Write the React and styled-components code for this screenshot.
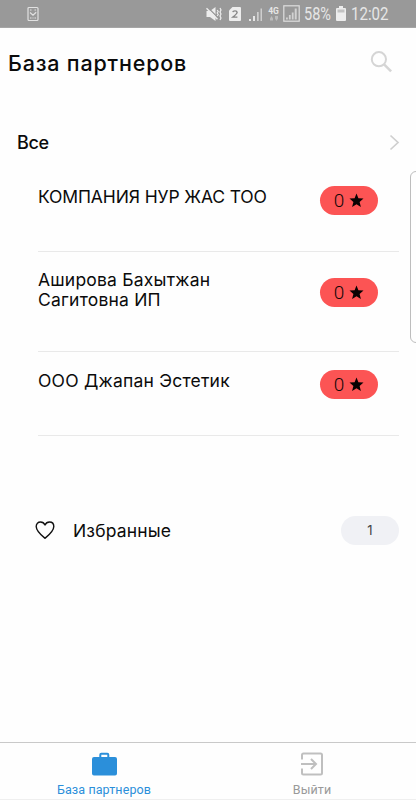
import React from "react";
import styled, { createGlobalStyle } from "styled-components";

const GlobalStyle = createGlobalStyle`
  * { box-sizing: border-box; }
  body { margin: 0; background: #fefefe; }
`;

const Screen = styled.div`
  position: relative;
  display: flex;
  flex-direction: column;
  width: 416px;
  height: 800px;
  overflow: hidden;
  background: #fefefe;
  color: #0b0b0b;
  font-family: Inter, "Open Sans", sans-serif;
`;

const StatusBar = styled.div`
  display: flex;
  align-items: center;
  height: 28px;
  flex: none;
  padding: 0 27px 0 27px;
  background: #999;
  border-bottom: 1px solid #a6a6a6;
  color: #e6e6e6;
  font-family: Roboto, sans-serif;
  svg { display: block; flex: none; }
`;

const StatusIcons = styled.div`
  display: flex;
  align-items: center;
  margin-left: auto;
`;

const StatusText = styled.span`
  width: ${(p) => p.$width}px;
  margin-left: ${(p) => p.$gap}px;
  font-size: 17.5px;
  line-height: 26px;
  white-space: nowrap;
  span {
    display: inline-block;
    transform: scaleX(${(p) => p.$squeeze});
    transform-origin: left;
  }
`;

const Header = styled.header`
  display: flex;
  align-items: center;
  justify-content: space-between;
  height: 68px;
  flex: none;
  padding: 0 23px 0 8px;
`;

const Title = styled.h1`
  margin: 0;
  padding-top: 2px;
  font-size: 21.5px;
  font-weight: 500;
  line-height: 28px;
  letter-spacing: 0.8px;
  white-space: nowrap;
`;

const SectionHeader = styled.div`
  display: flex;
  align-items: center;
  justify-content: space-between;
  height: 32px;
  flex: none;
  margin-top: 30px;
  padding: 0 16px 0 17px;
`;

const SectionTitle = styled.h2`
  margin: 0;
  padding-top: 2px;
  font-size: 18px;
  font-weight: 500;
  line-height: 24px;
  letter-spacing: -0.3px;
`;

const PartnerList = styled.div`
  display: flex;
  flex-direction: column;
  margin: 10px 17px 0 38px;
`;

const PartnerRow = styled.div`
  display: flex;
  align-items: flex-start;
  height: ${(p) => (p.$tall ? 100 : 84)}px;
  padding: 18px 21px 0 0;
  border-bottom: 1px solid #e9e9e9;
`;

const RowContent = styled.div`
  display: flex;
  flex: 1;
  align-items: center;
  justify-content: space-between;
`;

const PartnerName = styled.div`
  padding-bottom: ${(p) => (p.$tall ? 5 : 8)}px;
  font-size: 17.5px;
  line-height: 20px;
  letter-spacing: ${(p) => p.$tracking}px;
  white-space: pre;
`;

const Rating = styled.div`
  display: flex;
  align-items: center;
  justify-content: center;
  gap: 5px;
  width: 58px;
  height: 29px;
  flex: none;
  border-radius: 15px;
  background: #fc5454;
  color: #160808;
  font-family: Roboto, sans-serif;
  font-size: 19px;
  font-weight: 300;
  line-height: 30px;
`;

const Favorites = styled.div`
  display: flex;
  align-items: center;
  height: 30px;
  flex: none;
  margin-top: 79px;
  padding: 0 17px 0 35px;
`;

const FavoritesLabel = styled.span`
  padding-top: 1px;
  margin-left: 18px;
  font-size: 17.5px;
  line-height: 24px;
  letter-spacing: 0.15px;
`;

const Count = styled.span`
  width: 58px;
  height: 29px;
  margin-left: auto;
  border-radius: 15px;
  background: #f0f1f5;
  color: #444;
  font-size: 13px;
  line-height: 29px;
  text-align: center;
`;

const TabBar = styled.nav`
  display: grid;
  grid-template-columns: 1fr 1fr;
  height: 58px;
  flex: none;
  margin-top: auto;
  border-top: 1px solid #c9c9c9;
  border-bottom: 1px solid #efefef;
`;

const Tab = styled.div`
  display: flex;
  flex-direction: column;
  align-items: center;
  padding-top: 9px;
  color: ${(p) => (p.$active ? "#2b8fda" : "#999")};
  font-family: Roboto, sans-serif;
  font-size: 12.5px;
  line-height: 16px;
  letter-spacing: 0.1px;
  svg { display: block; margin-bottom: 6px; }
`;

const EdgePanel = styled.div`
  position: absolute;
  top: 171px;
  right: -6px;
  width: 12px;
  height: 172px;
  border: 1px solid #bdbdbd;
  border-radius: 7px;
  background: #fefefe;
`;

const TaskIcon = () => (
  <svg width="12" height="16" viewBox="0 0 12 16" fill="none" stroke="#e2e2e2" strokeWidth="1.2">
    <rect x="1" y="1.5" width="10" height="13" rx="1" />
    <path d="M3 4h1.5M7.5 4H9M3 6.5l3 2.7 3.2-3M3 12h1.5M5.5 12h1M7.5 12H9" />
  </svg>
);

const MuteIcon = () => (
  <svg width="16" height="16" viewBox="0 0 16 16">
    <path d="M0.500 5h3.500l5.500-4v14L4 11H.5z" fill="#ededed" />
    <path d="M1.800 1.500l10 10" stroke="#999" strokeWidth="1.200" />
    <path d="M0.500 2.200l11 11" stroke="#ededed" strokeWidth="1.500" />
    <path d="M11.200 4l1 1.5-1 1.5 1 1.5-1 1.5M14 2l1 2-1 2 1 2-1 2 1 2-1 2" fill="none" stroke="#ededed" strokeWidth="1.2" />
  </svg>
);

const SimIcon = () => (
  <svg width="12" height="14" viewBox="0 0 12 14">
    <path d="M3.5 0H11a1 1 0 0 1 1 1v12a1 1 0 0 1-1 1H1a1 1 0 0 1-1-1V3.5z" fill="#ededed" />
    <path d="M3.8 5.2Q4 3.9 6 3.9t2.1 1.5Q8.200 6.600 3.900 10.100H8.400" fill="none" stroke="#858585" strokeWidth="1.4" />
  </svg>
);

const SignalIcon = () => (
  <svg width="14" height="14" viewBox="0 0 14 14" fill="#e6e6e6">
    <path d="M0 12h2v2H0zM4 9h2v5H4z" />
    <path d="M8 5h1.700v9H8zM11.500 1.500h1.500V14h-1.500z" fill="#cecece" />
  </svg>
);

const NetworkLabel = styled.div`
  display: flex;
  flex-direction: column;
  align-items: center;
  width: 13px;
  margin: 0 3px 0 4px;
  font-size: 8.5px;
  font-weight: 700;
  line-height: 8px;
  svg { margin-top: 1px; }
`;

const BoxSignalIcon = () => (
  <svg width="17" height="17" viewBox="0 0 17 17">
    <rect x="0.800" y="0.800" width="15.400" height="15.400" fill="none" stroke="#dedede" strokeWidth="1.200" />
    <path d="M3 12.500h1.800v2H3zM5.900 10h1.800v4.500H5.900zM8.800 7.500h1.800v7H8.800zM11.700 3.500h2v11h-2z" fill="#d2d2d2" />
  </svg>
);

const BatteryIcon = () => (
  <svg width="10" height="15" viewBox="0 0 10 15">
    <path d="M3 0h4v2h2a1 1 0 0 1 1 1v11a1 1 0 0 1-1 1H1a1 1 0 0 1-1-1V3a1 1 0 0 1 1-1h2z" fill="#ededed" />
    <path d="M1.500 3.500h7v3h-7z" fill="#c2c2c2" />
  </svg>
);

const SearchIcon = () => (
  <svg width="23" height="23" viewBox="0 0 23 23" fill="none" stroke="#d5d5d5">
    <circle cx="8.900" cy="8.200" r="7.100" strokeWidth="2" />
    <path d="M13.800 13.100l7.300 7.200" strokeWidth="2.500" />
  </svg>
);

const ChevronIcon = () => (
  <svg width="11" height="17" viewBox="0 0 11 17" fill="none" stroke="#cfcfcf" strokeWidth="1.700">
    <path d="M1.500 1.500l7.500 7-7.500 7" />
  </svg>
);

const StarIcon = () => (
  <svg width="15" height="15" viewBox="0 0 15 15" fill="#090303">
    <path d="M7.500 0.500l1.900 4.700 5.100.4-3.900 3.300 1.300 5.200-4.400-2.800-4.400 2.800 1.300-5.200L.5 5.600l5.100-.4z" />
  </svg>
);

const HeartIcon = () => (
  <svg width="20" height="20" viewBox="0 0 20 20" fill="none" stroke="#111" strokeWidth="1.400" strokeLinejoin="round">
    <path d="M10 18.300C6.200 15.200 1.200 11.200 1.200 6.500 1.200 3.700 3 2 5.500 2 7.500 2 9.200 3.200 10 5c.8-1.800 2.500-3 4.500-3 2.500 0 4.300 1.700 4.300 4.500 0 4.700-5 8.700-8.800 11.800z" />
  </svg>
);

const BriefcaseIcon = () => (
  <svg width="25" height="24" viewBox="0 0 25 24" fill="#2b8fda">
    <path fillRule="evenodd" d="M7.300 5V2.800Q7.300.8 9.300.8h6q2 0 2 2V5H23q2 0 2 2v14.500q0 2-2 2H2q-2 0-2-2V7q0-2 2-2zM9.300 5h6V2.800h-6z" />
  </svg>
);

const ExitIcon = () => (
  <svg width="24" height="24" viewBox="0 0 24 24" fill="none" stroke="#bfbfbf" strokeWidth="2">
    <path d="M2 7.500V3q0-1.500 1.500-1.500h17Q22 1.500 22 3v18q0 1.500-1.500 1.500h-17Q2 22.500 2 21v-4.500M1 12h14.500M11 7l5 5-5 5" />
  </svg>
);

const partners = [
  { name: "КОМПАНИЯ НУР ЖАС ТОО", tracking: -0.13 },
  { name: "Аширова Бахытжан\nСагитовна ИП", tracking: 0.2, tall: true },
  { name: "ООО Джапан Эстетик", tracking: 0.22 },
];

export default function App() {
  return (
    <Screen>
      <GlobalStyle />
      <StatusBar>
        <TaskIcon />
        <StatusIcons>
          <MuteIcon />
          <svg width="7" height="1" />
          <SimIcon />
          <svg width="8" height="1" />
          <SignalIcon />
          <NetworkLabel>
            4G
            <svg width="8" height="5" viewBox="0 0 8 5" fill="#bcbcbc">
              <path d="M0 2.500L1.500 0 3 2.500v2H0zM5 0h3v2.500L6.500 5 5 2.500z" />
            </svg>
          </NetworkLabel>
          <BoxSignalIcon />
          <StatusText $width={27} $gap={4} $squeeze={0.83}><span>58%</span></StatusText>
          <svg width="5" height="1" />
          <BatteryIcon />
          <StatusText $width={38} $gap={5} $squeeze={0.86}><span>12:02</span></StatusText>
        </StatusIcons>
      </StatusBar>
      <Header>
        <Title>База партнеров</Title>
        <SearchIcon />
      </Header>
      <SectionHeader>
        <SectionTitle>Все</SectionTitle>
        <ChevronIcon />
      </SectionHeader>
      <PartnerList>
        {partners.map((p) => (
          <PartnerRow key={p.name} $tall={p.tall}>
            <RowContent>
              <PartnerName $tracking={p.tracking} $tall={p.tall}>{p.name}</PartnerName>
              <Rating>0<StarIcon /></Rating>
            </RowContent>
          </PartnerRow>
        ))}
      </PartnerList>
      <Favorites>
        <HeartIcon />
        <FavoritesLabel>Избранные</FavoritesLabel>
        <Count>1</Count>
      </Favorites>
      <TabBar>
        <Tab $active><BriefcaseIcon />База партнеров</Tab>
        <Tab><ExitIcon />Выйти</Tab>
      </TabBar>
      <EdgePanel />
    </Screen>
  );
}
